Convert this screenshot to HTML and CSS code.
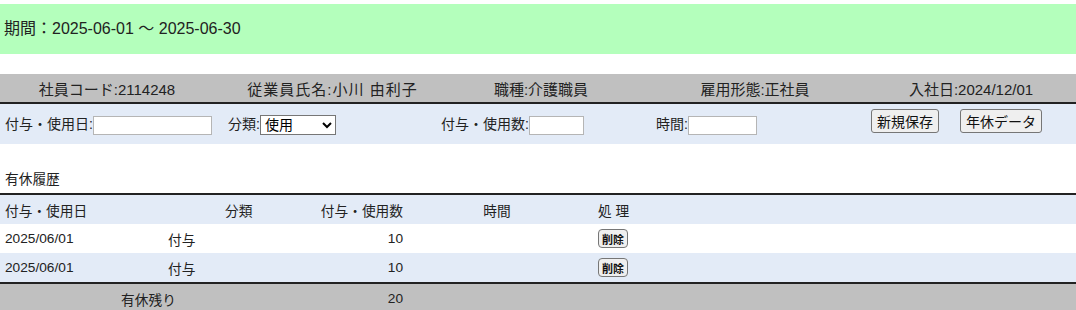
FILE: index.html
```html
<!DOCTYPE html>
<html lang="ja">
<head>
    <meta charset="UTF-8">
    <title>有休管理</title>
    <link rel="stylesheet" href="styles.css">
</head>
<body>
    <div class="period">期間：2025-06-01 〜 2025-06-30</div>

    <table class="info">
        <colgroup>
            <col class="i1"><col class="i2"><col class="i3"><col class="i4"><col>
        </colgroup>
        <tr>
            <td>社員コード:2114248</td>
            <td class="name">従業員氏名:小川 由利子</td>
            <td>職種:介護職員</td>
            <td>雇用形態:正社員</td>
            <td class="last">入社日:2024/12/01</td>
        </tr>
    </table>

    <table class="entry">
        <colgroup>
            <col class="e1"><col class="e2"><col class="e3"><col class="e4"><col>
        </colgroup>
        <tr>
            <td>付与・使用日:<input type="text" class="date-input"></td>
            <td>分類:<select class="kind">
                    <option>使用</option>
                    <option>付与</option>
                </select></td>
            <td>付与・使用数:<input type="text" class="num-input"></td>
            <td>時間:<input type="text" class="time-input"></td>
            <td class="actions">
                <button class="btn">新規保存</button>
                <button class="btn">年休データ</button>
            </td>
        </tr>
    </table>

    <div class="caption">有休履歴</div>

    <table class="history">
        <colgroup>
            <col class="c-date">
            <col class="c-kind">
            <col class="c-num">
            <col class="c-time">
            <col>
        </colgroup>
        <tr class="head">
            <td>付与・使用日</td>
            <td class="kind-head">分類</td>
            <td class="right">付与・使用数</td>
            <td class="center time-head">時間</td>
            <td>処 理</td>
        </tr>
        <tr>
            <td>2025/06/01</td>
            <td class="kind-cell">付与</td>
            <td class="right">10</td>
            <td></td>
            <td><button class="del">削除</button></td>
        </tr>
        <tr class="alt">
            <td>2025/06/01</td>
            <td class="kind-cell">付与</td>
            <td class="right">10</td>
            <td></td>
            <td><button class="del">削除</button></td>
        </tr>
        <tr class="total">
            <td colspan="2" class="center rest">有休残り</td>
            <td class="right">20</td>
            <td></td>
            <td></td>
        </tr>
    </table>
</body>
</html>
```

FILE: styles.css
```css
body {
    font-family: "Liberation Sans", Arial, "Noto Sans CJK JP", sans-serif;
    font-size: 14px;
    color: #222;
    margin: 4px 0 0 0;
}
.period {
    background-color: #b4ffbc;
    height: 50px;
    line-height: 50px;
    padding-left: 4px;
    font-size: 16px;
}
table {
    width: 100%;
    border-collapse: collapse;
    table-layout: fixed;
}
td {
    padding: 0 5px;
}

/* 社員情報 */
.info {
    margin-top: 20px;
    background-color: #c0c0c0;
    border-bottom: 2px solid #222;
    font-size: 15px;
}
.info td {
    height: 28px;
    text-align: center;
    white-space: nowrap;
}
.info td.name {
    letter-spacing: 1px;
}
.info td.last {
    padding-right: 18px;
}
.i1 { width: 214px; }
.i2 { width: 237px; }
.i3 { width: 180px; }
.i4 { width: 248px; }

/* 入力行 */
.entry {
    background-color: #e3ebf7;
}
.entry td {
    height: 40px;
    vertical-align: middle;
    white-space: nowrap;
}
.e1 { width: 223px; }
.e2 { width: 213px; }
.e3 { width: 215px; }
.e4 { width: 215px; }
.entry input {
    border: 1px solid #b5b5b5;
    height: 17px;
    padding: 0 2px;
    font-size: 13.33px;
    vertical-align: middle;
}
.date-input {
    width: 113px;
}
.num-input {
    width: 49px;
}
.time-input {
    width: 63px;
}
.kind {
    width: 76px;
    height: 20px;
    font-size: 14px;
    font-family: inherit;
    vertical-align: middle;
    border: 1px solid #767676;
    background: #fff;
}
.entry td.actions {
    vertical-align: top;
}
.btn {
    font-family: inherit;
    font-size: 14px;
    height: 24px;
    margin-top: 5px;
    padding: 0 5px;
    background-color: #efefef;
    border: 1px solid #767676;
    border-radius: 3px;
    color: #111;
    vertical-align: top;
}
.btn + .btn {
    margin-left: 17px;
}

/* 履歴 */
.caption {
    margin-top: 26px;
    height: 23px;
    line-height: 20px;
    padding-left: 5px;
    font-size: 13.7px;
}
.history {
    border-top: 2px solid #222;
    font-size: 13.7px;
}
.history td {
    height: 29px;
    vertical-align: middle;
    white-space: nowrap;
}
.c-date { width: 160px; }
.c-kind { width: 144px; }
.c-num { width: 104px; }
.c-time { width: 185px; }
.head,
.alt {
    background-color: #e3ebf7;
}
.kind-head {
    padding-left: 65px;
}
.kind-cell {
    padding-left: 8px;
}
.time-head {
    padding-right: 12px;
}
.right {
    text-align: right;
}
.center {
    text-align: center;
}
.rest {
    padding-right: 12px;
}
.total {
    background-color: #c0c0c0;
    border-top: 2px solid #222;
}
.del {
    font-family: inherit;
    font-size: 11px;
    font-weight: bold;
    height: 19px;
    padding: 0 3px;
    background-color: #efefef;
    border: 1px solid #767676;
    border-radius: 4px;
    color: #111;
}
```
